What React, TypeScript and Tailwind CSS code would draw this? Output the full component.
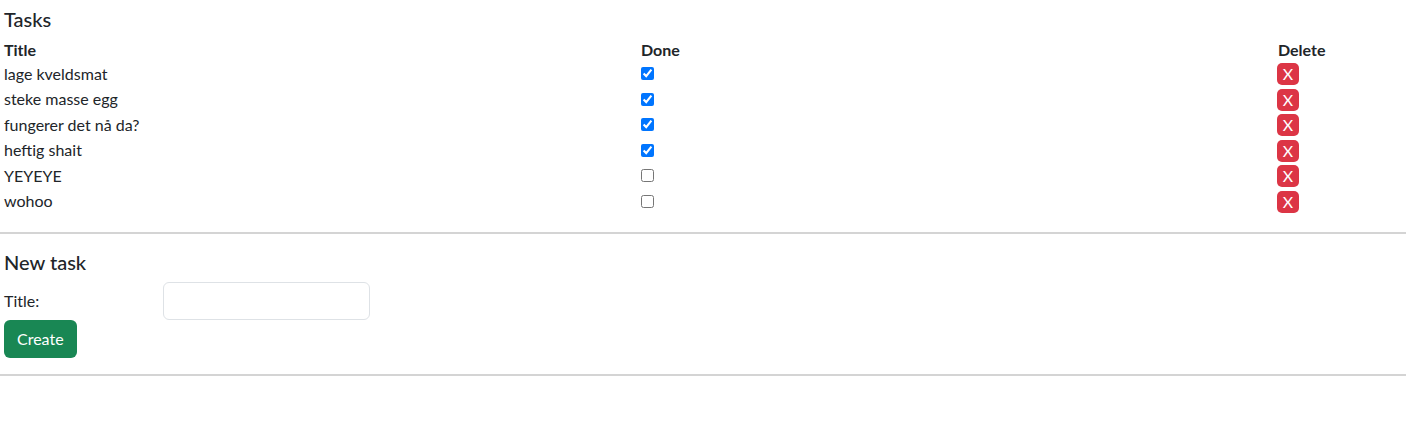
import React, { useState } from "react";

interface Task {
  id: number;
  title: string;
  done: boolean;
}

const initialTasks: Task[] = [
  { id: 1, title: "lage kveldsmat", done: true },
  { id: 2, title: "steke masse egg", done: true },
  { id: 3, title: "fungerer det nå da?", done: true },
  { id: 4, title: "heftig shait", done: true },
  { id: 5, title: "YEYEYE", done: false },
  { id: 6, title: "wohoo", done: false },
];

const App: React.FC = () => {
  const [tasks, setTasks] = useState<Task[]>(initialTasks);
  const [title, setTitle] = useState("");

  const toggle = (id: number) =>
    setTasks((ts) => ts.map((t) => (t.id === id ? { ...t, done: !t.done } : t)));

  const remove = (id: number) => setTasks((ts) => ts.filter((t) => t.id !== id));

  const create = () => {
    if (!title.trim()) return;
    setTasks((ts) => [...ts, { id: Date.now(), title, done: false }]);
    setTitle("");
  };

  return (
    <div className="min-h-[427px] bg-white font-['Segoe_UI','Lato',sans-serif] text-[16px] text-[#212529]">
      <div className="px-[4px] pt-[7px]">
        <h2 className="text-[20px] font-medium leading-[24px]">Tasks</h2>
        <div className="mt-[7px] grid grid-cols-[637px_637px_auto]">
          <div className="h-[23px] font-bold leading-[23px]">Title</div>
          <div className="h-[23px] font-bold leading-[23px]">Done</div>
          <div className="h-[23px] font-bold leading-[23px]">Delete</div>
          {tasks.map((t) => (
            <React.Fragment key={t.id}>
              <div className="flex h-[25.5px] items-center">{t.title}</div>
              <div className="flex h-[25.5px] items-start pt-[6px]">
                <input
                  type="checkbox"
                  checked={t.done}
                  onChange={() => toggle(t.id)}
                  className="m-0 h-[13px] w-[13px] accent-[#0075ff]"
                />
              </div>
              <div className="flex h-[25.5px] items-center">
                <button
                  onClick={() => remove(t.id)}
                  className="ml-[-1px] mt-[1px] flex h-[22px] w-[22px] items-center justify-center rounded-[5px] bg-[#dc3545] text-[16px] leading-none text-white"
                >
                  X
                </button>
              </div>
            </React.Fragment>
          ))}
        </div>
      </div>
      <hr className="mt-[18px] border-t-2 border-[#d4d4d4]" />
      <div className="px-[4px] pt-[16px]">
        <h2 className="text-[20px] font-medium leading-[24px]">New task</h2>
        <div className="mt-[8px] flex items-center">
          <label className="w-[159px]">Title:</label>
          <input
            value={title}
            onChange={(e) => setTitle(e.target.value)}
            className="h-[38px] w-[207px] rounded-[6px] border border-[#dee2e6] px-3 outline-none"
          />
        </div>
        <button
          onClick={create}
          className="h-[38px] rounded-[6px] bg-[#198754] px-[13px] text-white"
        >
          Create
        </button>
      </div>
      <hr className="mt-[16px] border-t-2 border-[#d4d4d4]" />
    </div>
  );
};

export default App;
